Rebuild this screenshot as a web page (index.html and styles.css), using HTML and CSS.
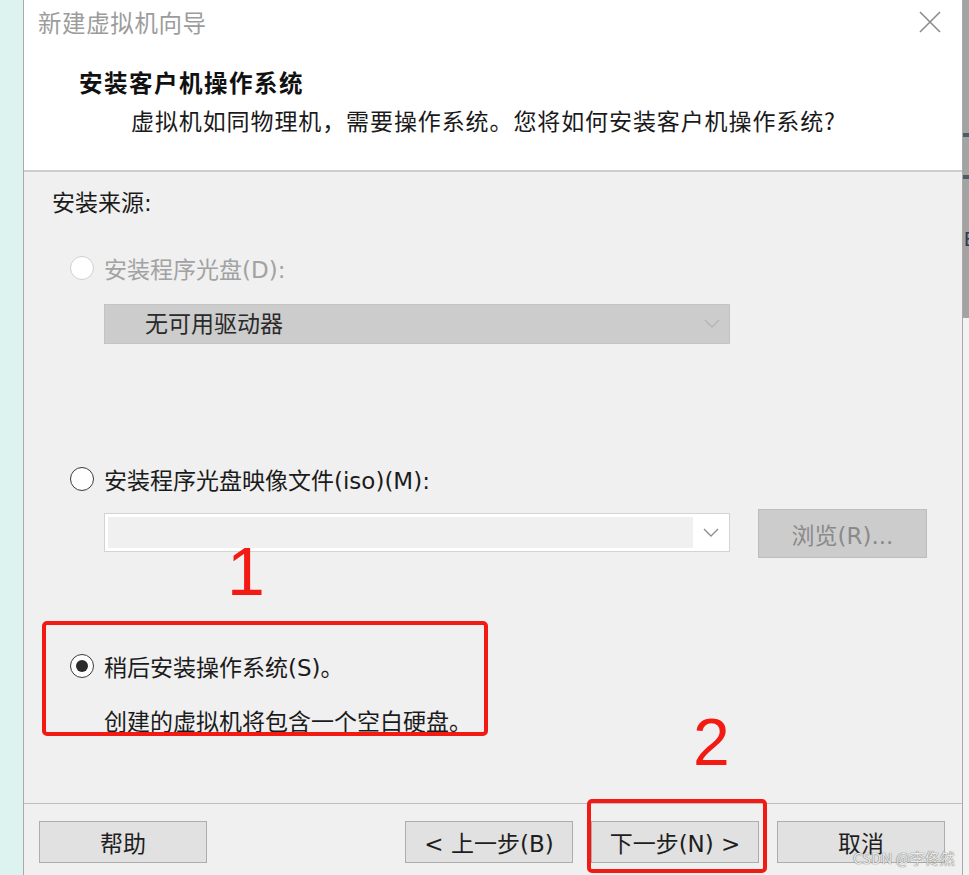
FILE: index.html
```html
<!DOCTYPE html>
<html lang="zh-CN">
<head>
<meta charset="utf-8">
<title>新建虚拟机向导</title>
<link rel="stylesheet" href="styles.css">
</head>
<body>
<div class="screen">
  <div class="bg-left"></div>
  <div class="dialog">
    <div class="header">
      <div class="titlebar">
        <span class="title">新建虚拟机向导</span>
        <svg class="close" width="22" height="22" viewBox="0 0 22 22"><path d="M1 1 L21 21 M21 1 L1 21" stroke="#8c8c8c" stroke-width="1.6" fill="none"/></svg>
      </div>
      <div class="heading">安装客户机操作系统</div>
      <div class="subheading">虚拟机如同物理机，需要操作系统。您将如何安装客户机操作系统?</div>
    </div>
    <div class="body">
      <div class="label">安装来源:</div>
      <div class="radio-row disabled r1">
        <span class="radio"></span><span>安装程序光盘(D):</span>
      </div>
      <div class="select disabled-select">
        <span class="select-text">无可用驱动器</span>
        <svg class="chev" width="16" height="10" viewBox="0 0 16 10"><path d="M1 1 L8 8 L15 1" stroke="#b4b4b4" stroke-width="1.4" fill="none"/></svg>
      </div>
      <div class="radio-row r2">
        <span class="radio"></span><span>安装程序光盘映像文件(iso)(M):</span>
      </div>
      <div class="iso-row">
        <div class="combo">
          <div class="combo-input"></div>
          <svg class="chev" width="16" height="10" viewBox="0 0 16 10"><path d="M1 1 L8 8 L15 1" stroke="#8f8f8f" stroke-width="1.4" fill="none"/></svg>
        </div>
        <div class="browse">浏览(R)...</div>
      </div>
      <div class="radio-row r3">
        <span class="radio checked"></span><span>稍后安装操作系统(S)。</span>
      </div>
      <div class="desc">创建的虚拟机将包含一个空白硬盘。</div>
    </div>
    <div class="footer">
      <div class="btn help">帮助</div>
      <div class="nav">
        <div class="btn">&lt; 上一步(B)</div>
        <div class="btn next">下一步(N) &gt;</div>
        <div class="btn">取消</div>
      </div>
    </div>
  </div>
  <div class="bg-right">
    <div class="mark m1"></div>
    <div class="mark m2"></div>
    <div class="glyph">E</div>
    <div class="lower"></div>
  </div>
  <div class="anno num1">1</div>
  <div class="anno num2">2</div>
  <div class="anno box1"></div>
  <div class="anno box2"></div>
  <div class="watermark">CSDN @李佟然</div>
</div>
</body>
</html>
```
FILE: styles.css
```css
* { box-sizing: border-box; }
html, body { margin: 0; padding: 0; }
body {
  width: 969px;
  height: 875px;
  overflow: hidden;
  font-family: "DejaVu Sans", "Noto Sans CJK SC", sans-serif;
  color: #1b1b1b;
}
.screen {
  position: relative;
  display: flex;
  width: 969px;
  height: 875px;
}
.bg-left {
  width: 23px;
  background: #dcf3ef;
}
.dialog {
  width: 940px;
  height: 875px;
  border-left: 1px solid #a9a9a9;
  border-right: 1px solid #a9a9a9;
  display: flex;
  flex-direction: column;
  background: #f0f0f0;
}
.header {
  height: 172px;
  background: #ffffff;
  border-bottom: 2px solid #cdcdcd;
}
.titlebar {
  height: 44px;
  display: flex;
  align-items: center;
  justify-content: space-between;
  padding: 0 21px 0 14px;
}
.title {
  font-family: "Noto Sans CJK SC", sans-serif;
  font-size: 23.5px;
  letter-spacing: 0.6px;
  color: #9c9c9c;
  line-height: 30px;
}
.close { display: block; }
.heading {
  margin: 23px 0 0 55px;
  font-family: "Noto Sans CJK SC", sans-serif;
  font-weight: 700;
  font-size: 23.5px;
  line-height: 30px;
  letter-spacing: 1.5px;
  color: #111;
}
.subheading {
  margin: 8px 0 0 107px;
  font-family: "Noto Sans CJK SC", sans-serif;
  font-size: 23px;
  line-height: 30px;
  letter-spacing: 0.9px;
  color: #1a1a1a;
}
.body {
  height: 631px;
  padding: 16px 0 0 28px;
  font-size: 23px;
}
.label {
  line-height: 30px;
  color: #1b1b1b;
}
.radio-row {
  display: flex;
  align-items: center;
  height: 30px;
  padding-left: 18px;
  gap: 10px;
  color: #1b1b1b;
}
.radio-row.disabled { color: #a2a2a2; }
.r1 { margin-top: 35px; }
.r2 { margin-top: 120px; }
.r3 { margin-top: 93px; }
.radio {
  width: 24px;
  height: 24px;
  border-radius: 50%;
  border: 1.6px solid #3a3a3a;
  background: #fff;
  display: flex;
  align-items: center;
  justify-content: center;
  flex: none;
}
.disabled .radio { border-color: #cfcfcf; }
.radio.checked::after {
  content: "";
  width: 12px;
  height: 12px;
  border-radius: 50%;
  background: #2b2b2b;
}
.select {
  margin: 21px 0 0 52px;
  width: 626px;
  height: 40px;
  display: flex;
  align-items: center;
  justify-content: space-between;
  padding: 0 9px 0 40px;
}
.disabled-select {
  background: #cccccc;
  border: 1px solid #c3c3c3;
  color: #2a2a2a;
}
.select-text { line-height: 30px; }
.chev { display: block; }
.iso-row {
  margin: 15px 0 0 52px;
  display: flex;
  align-items: center;
  gap: 28px;
  height: 49px;
}
.combo {
  width: 626px;
  height: 39px;
  margin-top: -2px;
  background: #ffffff;
  border: 1.5px solid #d3d3d3;
  display: flex;
  align-items: center;
  padding: 3px 9px 3px 3px;
  gap: 10px;
}
.combo-input {
  width: 585px;
  height: 100%;
  background: #f0f0f0;
}
.browse {
  width: 169px;
  height: 49px;
  background: #cccccc;
  border: 1.5px solid #bdbdbd;
  color: #8a8a8a;
  display: flex;
  align-items: center;
  justify-content: center;
}
.desc {
  margin: 26px 0 0 52px;
  line-height: 30px;
  color: #1b1b1b;
}
.footer {
  flex: 1;
  border-top: 1.5px solid #bfbfbf;
  display: flex;
  align-items: flex-start;
  justify-content: space-between;
  padding: 17px 17px 0 15px;
  font-size: 23px;
}
.nav {
  display: flex;
  gap: 18px;
}
.btn {
  width: 168px;
  height: 42px;
  background: #e1e1e1;
  border: 1.5px solid #adadad;
  display: flex;
  align-items: center;
  justify-content: center;
  color: #1e1e1e;
}
.bg-right {
  position: relative;
  width: 6px;
  background: #a3a3a3;
  overflow: hidden;
}
.mark {
  position: absolute;
  left: 0;
  width: 6px;
  height: 4px;
  background: #4f5a66;
}
.m1 { top: 133px; }
.m2 { top: 175px; }
.glyph {
  position: absolute;
  left: 1px;
  top: 228px;
  font-family: "Liberation Sans", sans-serif;
  font-size: 20px;
  line-height: 22px;
  color: #2c3a52;
}
.lower {
  position: absolute;
  left: 0;
  top: 318px;
  width: 6px;
  height: 557px;
  background: #f3f3f3;
}
.anno {
  position: absolute;
  color: #f41a14;
  font-family: "Liberation Sans", sans-serif;
  line-height: 1;
}
.num1 {
  left: 227px;
  top: 537px;
  font-size: 68px;
}
.num2 {
  left: 693px;
  top: 709px;
  font-size: 66px;
}
.box1 {
  left: 42px;
  top: 621px;
  width: 446px;
  height: 115px;
  border: 4px solid #f41a14;
  border-radius: 5px;
}
.box2 {
  left: 587px;
  top: 799px;
  width: 180px;
  height: 74px;
  border: 4px solid #f41a14;
  border-radius: 5px;
}
.watermark {
  position: absolute;
  left: 853px;
  top: 847px;
  font-family: "Noto Sans CJK SC", sans-serif;
  font-size: 15px;
  line-height: 22px;
  color: rgba(255, 255, 255, 0.85);
  text-shadow: 0 0 1px #777, 0 0 1px #777;
}
```
